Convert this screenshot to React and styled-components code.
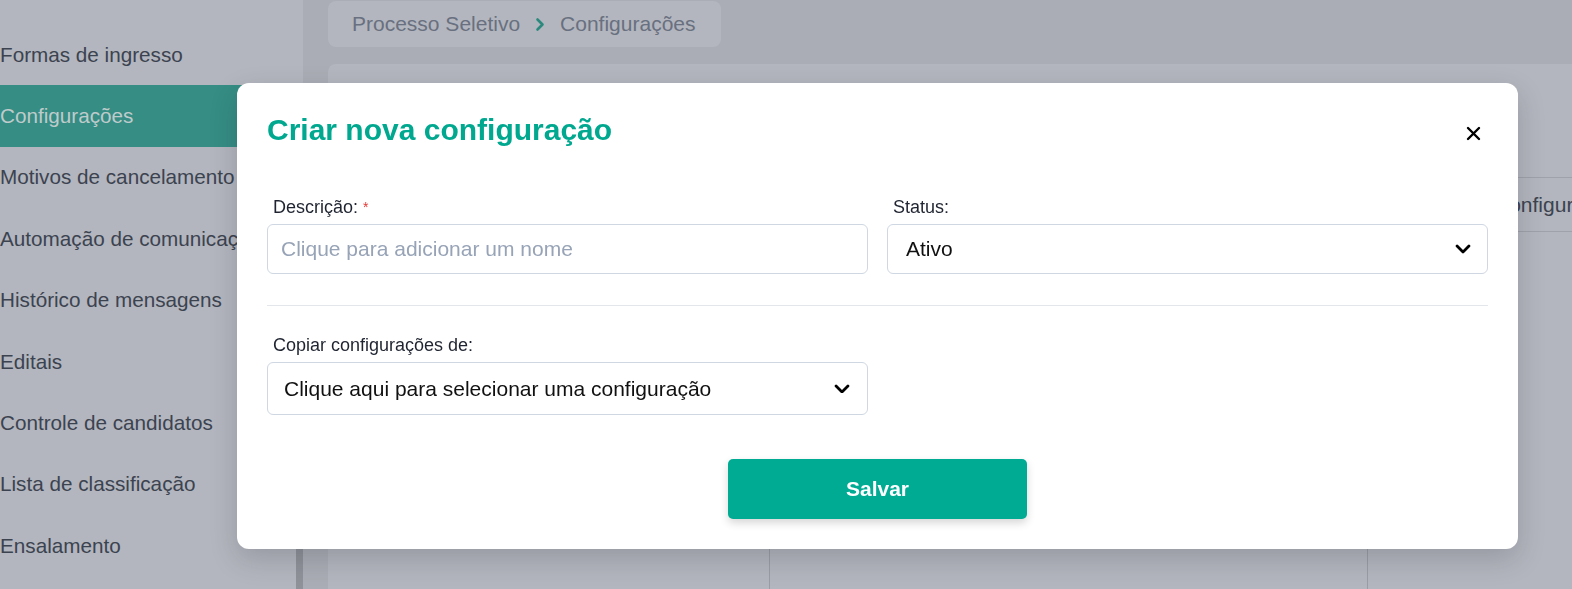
import React, { useState } from "react";
import styled, { createGlobalStyle } from "styled-components";

const GlobalStyle = createGlobalStyle`
  html, body {
    margin: 0;
    padding: 0;
    overflow: hidden;
    background: #aaadb5;
    font-family: "Liberation Sans", Arial, sans-serif;
  }
  * { box-sizing: border-box; }
`;

const menu = [
  "Formas de ingresso",
  "Configurações",
  "Motivos de cancelamento",
  "Automação de comunicação",
  "Histórico de mensagens",
  "Editais",
  "Controle de candidatos",
  "Lista de classificação",
  "Ensalamento",
];

function Chevron({ size = 16, color = "#000", strokeWidth = 2.8 }) {
  return (
    <svg width={size} height={size * 0.62} viewBox="0 0 16 10" fill="none">
      <path d="M2 2 L8 8 L14 2" stroke={color} strokeWidth={strokeWidth} strokeLinecap="round" strokeLinejoin="round" />
    </svg>
  );
}

export default function App() {
  const [nome, setNome] = useState("");

  return (
    <>
      <GlobalStyle />
      <Layout>
        <Sidebar>
          {menu.map((item) => (
            <NavItem key={item} $active={item === "Configurações"}>{item}</NavItem>
          ))}
        </Sidebar>
        <ScrollTrack>
          <ScrollThumb />
        </ScrollTrack>
        <Main>
          <Breadcrumb>
            <span>Processo Seletivo</span>
            <svg width="10" height="15" viewBox="0 0 10 15" fill="none">
              <path d="M2.5 2.5 L7.5 7.5 L2.5 12.5" stroke="#2b8a7d" strokeWidth="2.6" strokeLinecap="round" strokeLinejoin="round" />
            </svg>
            <span>Configurações</span>
          </Breadcrumb>
          <ContentCard>
            <Table>
              <HeaderRow>
                <HeadCell>Descrição</HeadCell>
                <HeadCell>Status</HeadCell>
                <HeadCell />
                <HeadCell>Configurações</HeadCell>
              </HeaderRow>
              <BodyRow>
                <BodyCell />
                <BodyCell />
                <BodyCell />
                <BodyCell />
              </BodyRow>
            </Table>
          </ContentCard>
        </Main>
      </Layout>

      <Modal>
        <ModalHeader>
          <Title>Criar nova configuração</Title>
          <CloseButton aria-label="Fechar">
            <svg width="15" height="15" viewBox="0 0 15 15" fill="none">
              <path d="M2 2 L13 13 M13 2 L2 13" stroke="#000" strokeWidth="2.4" strokeLinecap="round" />
            </svg>
          </CloseButton>
        </ModalHeader>

        <FormRow $first>
          <Field>
            <Label>Descrição:<Required>*</Required></Label>
            <Input
              placeholder="Clique para adicionar um nome"
              value={nome}
              onChange={(e) => setNome(e.target.value)}
            />
          </Field>
          <Field>
            <Label>Status:</Label>
            <SelectBox $pad={18} $chevronRight={16}>
              <span>Ativo</span>
              <Chevron />
            </SelectBox>
          </Field>
        </FormRow>

        <Divider />

        <FormRow>
          <Field>
            <Label>Copiar configurações de:</Label>
            <SelectBox $pad={16} $chevronRight={17} $height={53}>
              <span>Clique aqui para selecionar uma configuração</span>
              <Chevron />
            </SelectBox>
          </Field>
        </FormRow>

        <Footer>
          <SaveButton>Salvar</SaveButton>
        </Footer>
      </Modal>
    </>
  );
}

const Layout = styled.div`
  display: flex;
  height: 589px;
  width: 1572px;
  overflow: hidden;
`;

const Sidebar = styled.nav`
  width: 296px;
  flex-shrink: 0;
  background: #b3b6be;
  padding-top: 24px;
  overflow: hidden;
`;

const NavItem = styled.div`
  height: 61.4px;
  display: flex;
  align-items: center;
  white-space: nowrap;
  font-size: 20.7px;
  color: ${(p) => (p.$active ? "#bfcbcb" : "#3c4350")};
  background: ${(p) => (p.$active ? "#358d84" : "transparent")};
`;

const ScrollTrack = styled.div`
  width: 7px;
  flex-shrink: 0;
  background: #b3b6be;
  display: flex;
  flex-direction: column;
  justify-content: flex-end;
`;

const ScrollThumb = styled.div`
  height: 300px;
  background: #8f9299;
`;

const Main = styled.main`
  flex: 1;
  padding: 1px 0 0 25px;
  display: flex;
  flex-direction: column;
  min-width: 0;
`;

const Breadcrumb = styled.div`
  width: 393px;
  height: 46px;
  border-radius: 8px;
  background: #b3b6be;
  display: flex;
  align-items: center;
  gap: 15px;
  padding-left: 24px;
  font-size: 21px;
  color: #697080;
`;

const ContentCard = styled.section`
  margin-top: 17px;
  flex: 1;
  background: #b3b6be;
  border-radius: 8px 0 0 0;
  padding-top: 113px;
`;

const Table = styled.div`
  display: flex;
  flex-direction: column;
  height: 100%;
`;

const HeaderRow = styled.div`
  display: grid;
  grid-template-columns: 442px 598px 112px 1fr;
  height: 55px;
  border-top: 1px solid #9fa2aa;
  border-bottom: 1px solid #9fa2aa;
`;

const HeadCell = styled.div`
  display: flex;
  align-items: center;
  padding-left: 14px;
  font-size: 21px;
  color: #3c4350;
  white-space: nowrap;
  overflow: hidden;
`;

const BodyRow = styled.div`
  display: grid;
  grid-template-columns: 442px 598px 112px 1fr;
  flex: 1;
`;

const BodyCell = styled.div`
  border-right: 1px solid #9a9da5;
  &:nth-child(3), &:last-child { border-right: none; }
`;

const Modal = styled.div`
  position: fixed;
  left: 237px;
  top: 83px;
  width: 1281px;
  background: #fff;
  border-radius: 12px;
  padding: 29px 30px 30px;
  box-shadow: 0 10px 28px rgba(20, 24, 34, 0.18);
`;

const ModalHeader = styled.div`
  display: flex;
  justify-content: space-between;
  align-items: flex-start;
`;

const Title = styled.h2`
  margin: 0;
  font-size: 30px;
  line-height: 36px;
  font-weight: 700;
  color: #00a88f;
`;

const CloseButton = styled.button`
  border: none;
  background: transparent;
  padding: 0;
  width: 24px;
  height: 24px;
  margin: 9px 3px 0 0;
  display: flex;
  align-items: center;
  justify-content: center;
  cursor: pointer;
`;

const FormRow = styled.div`
  display: grid;
  grid-template-columns: 1fr 1fr;
  column-gap: 19px;
  margin-top: ${(p) => (p.$first ? "49px" : "0")};
`;

const Field = styled.div`
  display: flex;
  flex-direction: column;
`;

const Label = styled.label`
  font-size: 18px;
  line-height: 21px;
  color: #1f2430;
  padding-left: 6px;
  margin-bottom: 6px;
`;

const Required = styled.span`
  color: #e53935;
  font-size: 14px;
  vertical-align: top;
  margin-left: 5px;
`;

const Input = styled.input`
  height: 50px;
  border: 1px solid #cfd7e3;
  border-radius: 6px;
  padding: 0 13px;
  font-family: inherit;
  font-size: 21px;
  color: #111;
  outline: none;
  &::placeholder { color: #97a3b6; }
`;

const SelectBox = styled.div`
  height: ${(p) => p.$height || 50}px;
  border: 1px solid #cfd7e3;
  border-radius: 6px;
  padding: 0 ${(p) => p.$chevronRight}px 0 ${(p) => p.$pad}px;
  display: flex;
  align-items: center;
  justify-content: space-between;
  font-size: 21px;
  color: #111;
  cursor: pointer;
`;

const Divider = styled.hr`
  border: none;
  border-top: 1px solid #e3e6ea;
  margin: 31px 0 29px;
`;

const Footer = styled.div`
  display: flex;
  justify-content: center;
  margin-top: 44px;
`;

const SaveButton = styled.button`
  width: 299px;
  height: 60px;
  border: none;
  border-radius: 5px;
  background: #00ab94;
  color: #fff;
  font-family: inherit;
  font-size: 21px;
  font-weight: 700;
  box-shadow: 0 4px 9px rgba(0, 0, 0, 0.16);
  cursor: pointer;
`;
